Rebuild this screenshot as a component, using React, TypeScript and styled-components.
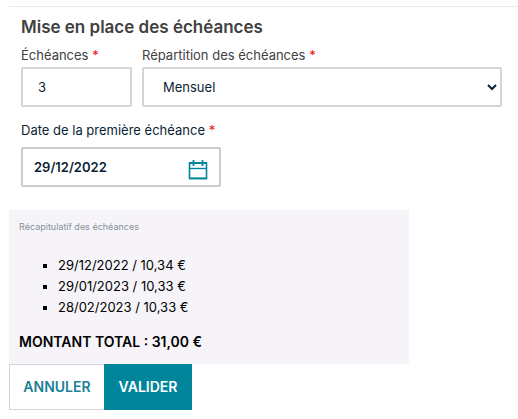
import React, { useState } from "react";
import styled, { createGlobalStyle } from "styled-components";

const teal = "#00859b";
const ink = "#0b1f35";

const GlobalStyle = createGlobalStyle`
  *, *::before, *::after { box-sizing: border-box; }
  body {
    margin: 0;
    background: #fff;
    color: ${ink};
    font-family: Inter, "Liberation Sans", sans-serif;
    font-size: 13px;
    line-height: 20px;
  }
  input, select, button { font: inherit; }
`;

const Form = styled.form`
  margin: 6px 0 0 9px;
  border-top: 1px solid #e9eaec;
`;

const Fields = styled.div`
  padding: 8px 16px 0 12px;
`;

const Title = styled.h2`
  margin: 0;
  color: #414141;
  font-size: 17px;
  line-height: 24px;
  font-weight: 600;
`;

const FieldRow = styled.div`
  display: flex;
  gap: 10px;
  padding-top: 6px;
`;

const Field = styled.div<{ $width?: number }>`
  flex: ${(p) => (p.$width ? `0 0 ${p.$width}px` : "1 1 0")};
  min-width: 0;
`;

const Label = styled.label<{ $dark?: boolean }>`
  display: block;
  margin-bottom: ${(p) => (p.$dark ? "7px" : "2px")};
  color: ${(p) => (p.$dark ? ink : "#414141")};
  white-space: nowrap;
`;

const Required = styled.span`
  color: #f00f14;
`;

const NumberInput = styled.input`
  display: block;
  width: 100%;
  height: 40px;
  padding: 0 15px;
  border: 2px solid #d0d6da;
  border-radius: 2px;
  background: #fff;
  color: ${ink};
`;

const Select = styled.select`
  display: block;
  width: 100%;
  height: 40px;
  padding: 0 1px 0 15px;
  border: 2px solid #d0d6da;
  border-radius: 2px;
  background: #fff;
  color: ${ink};
`;

const DateBlock = styled.div`
  padding-top: 13px;
`;

const DateBox = styled.div`
  display: flex;
  align-items: center;
  width: 200px;
  height: 40px;
  border: 2px solid #ccc;
  border-radius: 2px;
`;

const DateInput = styled.input`
  flex: 1;
  min-width: 0;
  padding: 0 0 0 11px;
  border: 0;
  background: transparent;
  color: ${ink};
  font-weight: 600;
`;

const CalendarButton = styled.button`
  display: flex;
  padding: 6px 11px 0;
  border: 0;
  background: none;
  color: ${teal};
  cursor: pointer;
`;

const Summary = styled.section`
  width: 400px;
  max-width: 100%;
  margin-top: 23px;
  padding: 8px 10px 12px;
  background: #f6f4f8;
  color: #000;
`;

const SummaryTitle = styled.h3`
  margin: 0 0 19px;
  color: #84929b;
  font-size: 9px;
  line-height: 18px;
  font-weight: 400;
`;

const Installments = styled.ul`
  margin: 0 0 14px;
  padding-left: 39px;
  list-style: square;
  line-height: 21px;
`;

const Total = styled.p`
  margin: 0;
  font-size: 14px;
  font-weight: 600;
`;

const Actions = styled.div`
  display: flex;
`;

const Action = styled.button<{ $primary?: boolean }>`
  height: 46px;
  min-width: ${(p) => (p.$primary ? "88px" : "95px")};
  padding: 0 13px;
  border: 1px solid ${(p) => (p.$primary ? teal : "#d0d6da")};
  border-right-width: ${(p) => (p.$primary ? "1px" : "0")};
  background: ${(p) => (p.$primary ? teal : "#fff")};
  color: ${(p) => (p.$primary ? "#fff" : "#1c8097")};
  font-size: 14px;
  font-weight: 600;
  cursor: pointer;
`;

const installments = [
  { date: "29/12/2022", amount: "10,34 €" },
  { date: "29/01/2023", amount: "10,33 €" },
  { date: "28/02/2023", amount: "10,33 €" },
];

function CalendarIcon() {
  return (
    <svg width="20" height="20" viewBox="0 0 20 20" fill="none" stroke="currentColor" aria-hidden="true">
      <path d="M1.5 2.5v16h17v-16" strokeWidth="1.6" />
      <path d="M1 3h18M1 18.3h18" strokeWidth="1.8" />
      <path d="M1 8.5h18" strokeWidth="1.4" />
      <path d="M5.5 0v6M14.5 0v6" strokeWidth="1.8" />
    </svg>
  );
}

export default function App() {
  const [count, setCount] = useState("3");
  const [frequency, setFrequency] = useState("Mensuel");
  const [date, setDate] = useState("29/12/2022");

  return (
    <>
      <GlobalStyle />
      <Form onSubmit={(e: React.FormEvent) => e.preventDefault()}>
        <Fields>
          <Title>Mise en place des échéances</Title>
          <FieldRow>
            <Field $width={111}>
              <Label htmlFor="count">Échéances <Required>*</Required></Label>
              <NumberInput
                id="count"
                inputMode="numeric"
                required
                value={count}
                onChange={(e) => setCount(e.target.value)}
              />
            </Field>
            <Field>
              <Label htmlFor="frequency">Répartition des échéances <Required>*</Required></Label>
              <Select id="frequency" required value={frequency} onChange={(e) => setFrequency(e.target.value)}>
                <option>Mensuel</option>
              </Select>
            </Field>
          </FieldRow>
          <DateBlock>
            <Label $dark htmlFor="first-date">Date de la première échéance <Required>*</Required></Label>
            <DateBox>
              <DateInput id="first-date" required value={date} onChange={(e) => setDate(e.target.value)} />
              <CalendarButton type="button" aria-label="Ouvrir le calendrier">
                <CalendarIcon />
              </CalendarButton>
            </DateBox>
          </DateBlock>
        </Fields>
        <Summary>
          <SummaryTitle>Récapitulatif des échéances</SummaryTitle>
          <Installments>
            {installments.map((item) => (
              <li key={item.date}>{`${item.date} / ${item.amount}`}</li>
            ))}
          </Installments>
          <Total>MONTANT TOTAL : 31,00 €</Total>
        </Summary>
        <Actions>
          <Action type="button">ANNULER</Action>
          <Action type="submit" $primary>VALIDER</Action>
        </Actions>
      </Form>
    </>
  );
}
